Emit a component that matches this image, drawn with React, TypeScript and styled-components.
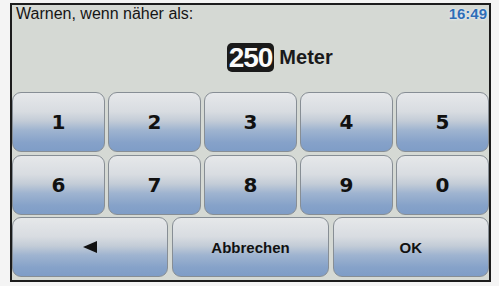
import styled, { createGlobalStyle } from "styled-components";

const GlobalStyle = createGlobalStyle`
  html, body {
    margin: 0;
    padding: 0;
    background: #f4f4f4;
    font-family: "Liberation Sans", Arial, sans-serif;
  }
`;

const Page = styled.div`
  width: 499px;
  height: 286px;
  box-sizing: border-box;
  padding: 3px 8px 4px 10px;
`;

const Frame = styled.div`
  box-sizing: border-box;
  width: 481px;
  height: 279px;
  border: 2px solid #1c1c1c;
  background: #d5d9d4;
  display: flex;
  flex-direction: column;
  padding: 0 0 1px 0;
`;

const Header = styled.div`
  height: 18px;
  display: flex;
  justify-content: space-between;
  align-items: center;
  padding: 0 1px 0 4px;
`;

const Title = styled.div`
  font-size: 16px;
  color: #151515;
  line-height: 18px;
`;

const Clock = styled.div`
  font-size: 15px;
  font-weight: bold;
  color: #2f6db5;
  line-height: 18px;
  padding: 0 1px;
  text-shadow: 0 0 3px #e4f0fb, 0 0 1px #eef6ff;
`;

const ValueRow = styled.div`
  margin-top: 20px;
  height: 29px;
  display: grid;
  grid-template-columns: 1fr auto 1fr;
  align-items: center;
  column-gap: 5px;
`;

const ValueBox = styled.div`
  grid-column: 2;
  height: 29px;
  padding: 0 2px;
  border-radius: 5px;
  background: #1a1a1a;
  color: #fafafa;
  font-size: 28px;
  font-weight: bold;
  letter-spacing: -1px;
  line-height: 29px;
  display: flex;
  align-items: center;
`;

const Unit = styled.div`
  grid-column: 3;
  font-size: 20px;
  font-weight: bold;
  color: #1a1a1a;
`;

const Keypad = styled.div`
  margin-top: 20px;
  display: flex;
  flex-direction: column;
  gap: 2px;
`;

const KeyGrid = styled.div<{ $cols: number; $gap: number }>`
  display: grid;
  grid-template-columns: repeat(${(p) => p.$cols}, 1fr);
  column-gap: ${(p) => p.$gap}px;
  row-gap: 3px;
`;

const Key = styled.button<{ $small?: boolean }>`
  box-sizing: border-box;
  height: 60px;
  margin: 0;
  padding: 0;
  border: 1px solid #878e95;
  border-radius: 9px;
  background: linear-gradient(
    180deg,
    #e6e8ea 0%,
    #d8dce1 32%,
    #c3ccd7 48%,
    #9fb4d0 64%,
    #86a2c9 85%,
    #7f9dc7 100%
  );
  color: #111;
  font-family: ${(p) =>
    p.$small
      ? `"Liberation Sans", Arial, sans-serif`
      : `"DejaVu Sans", Verdana, sans-serif`};
  font-weight: bold;
  font-size: ${(p) => (p.$small ? "15px" : "20px")};
  display: flex;
  align-items: center;
  justify-content: center;
  cursor: pointer;
`;

const digits = ["1", "2", "3", "4", "5", "6", "7", "8", "9", "0"];

export default function App() {
  return (
    <>
      <GlobalStyle />
      <Page>
        <Frame>
          <Header>
            <Title>Warnen, wenn näher als:</Title>
            <Clock>16:49</Clock>
          </Header>
          <ValueRow>
            <ValueBox>250</ValueBox>
            <Unit>Meter</Unit>
          </ValueRow>
          <Keypad>
            <KeyGrid $cols={5} $gap={3}>
              {digits.map((d) => (
                <Key key={d}>{d}</Key>
              ))}
            </KeyGrid>
            <KeyGrid $cols={3} $gap={4}>
              <Key aria-label="Zurück">
                <svg width="14" height="12" viewBox="0 0 14 12">
                  <polygon points="0,6 14,0 14,12" fill="#111" />
                </svg>
              </Key>
              <Key $small>Abbrechen</Key>
              <Key $small>OK</Key>
            </KeyGrid>
          </Keypad>
        </Frame>
      </Page>
    </>
  );
}
